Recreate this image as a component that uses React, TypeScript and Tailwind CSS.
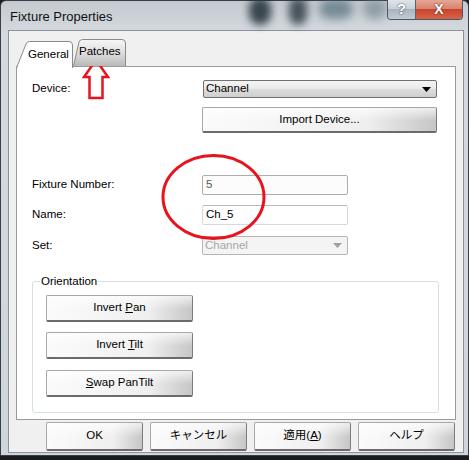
import type { ReactNode } from "react";

const btnFace =
  "bg-[linear-gradient(180deg,rgba(255,255,255,0.7)_0%,rgba(255,255,255,0)_55%),linear-gradient(90deg,#fbfbfb_0%,#efefef_70%,#c6c6c6_100%)]";

function WinButton({ children, className = "" }: { children: ReactNode; className?: string }) {
  return (
    <div
      className={`flex items-center justify-center rounded-[2px] border border-[#a8a8a8] border-b-2 border-b-[#6b6b6b] border-r-[#7c7c7c] text-black ${btnFace} ${className}`}
    >
      {children}
    </div>
  );
}

function Caret({ color }: { color: string }) {
  return (
    <svg width="9" height="5" viewBox="0 0 9 5">
      <path d="M0 0 L9 0 L4.5 5 Z" fill={color} />
    </svg>
  );
}

export default function App() {
  return (
    <div className="relative h-[460px] w-[469px] overflow-hidden bg-[#1b1b1b] font-['Liberation_Sans','Noto_Sans_CJK_JP',sans-serif] text-[11.5px] text-black">
      <div className="relative flex h-[456px] w-[469px] flex-col rounded-t-[6px] border border-[#3a3f45] bg-[linear-gradient(180deg,#c4cad0_0%,#d3d9df_30px,#cfd5dc_100%)]">
        {/* blurred desktop behind the glass */}
        <div className="absolute left-[248px] top-[-4px] h-[28px] w-[22px] rounded-full bg-[#1f2d35] opacity-85 blur-[4px]" />
        <div className="absolute left-[288px] top-[-4px] h-[28px] w-[18px] rounded-full bg-[#25323a] opacity-80 blur-[4px]" />
        <div className="absolute left-[318px] top-[-2px] h-[20px] w-[34px] rounded-full bg-[#4b6774] opacity-65 blur-[5px]" />
        <div className="absolute left-[362px] top-[-2px] h-[20px] w-[24px] rounded-full bg-[#62747d] opacity-55 blur-[5px]" />

        {/* title bar */}
        <div className="relative h-[29px] shrink-0 pl-[9px] pt-[8px] text-[13px] leading-[15px] text-[#111]">
          Fixture Properties
          <div className="absolute right-[5px] top-[-1px] flex h-[20px] overflow-hidden rounded-b-[4px] border border-t-0 border-[#4c5660]">
            <div className="flex w-[28px] items-center justify-center border-r border-[#59636c] bg-[linear-gradient(180deg,#dfe5ea_0%,#c9d1d8_45%,#a9b4bd_50%,#c2cbd2_100%)] text-[14px] font-bold text-white [text-shadow:0_0_2px_#2a3035]">
              ?
            </div>
            <div className="flex w-[46px] items-center justify-center bg-[linear-gradient(180deg,#e6a797_0%,#d98470_45%,#c8452c_50%,#d7654a_100%)] text-[14px] font-bold text-white [text-shadow:0_0_2px_#3a1208]">
              X
            </div>
          </div>
        </div>

        {/* client area */}
        <div className="ml-[7px] flex h-[423px] w-[456px] flex-col border border-[#8d939a] bg-[#f0f0f0] pl-[7px] pt-[8px]">
          {/* tabs */}
          <div className="relative z-10 -mb-px flex h-[28px] items-end">
            <div className="relative h-[27px] w-[57px]">
              <svg className="absolute inset-0" width="57" height="28" viewBox="0 0 57 28">
                <path d="M0.5 28 L10 4 Q11 1.5 13.5 1.5 L53 1.5 Q56.5 1.5 56.5 5 L56.5 28" fill="#ffffff" stroke="#8a8a8a" />
              </svg>
              <span className="absolute left-[12px] top-[7px] leading-[14px]">General</span>
            </div>
            <div className="relative mb-px h-[28px] w-[53px]">
              <svg className="absolute inset-0" width="53" height="28" viewBox="0 0 53 28">
                <defs>
                  <linearGradient id="tabg" x1="0" y1="0" x2="0" y2="1">
                    <stop offset="0" stopColor="#f7f7f7" />
                    <stop offset="0.5" stopColor="#dedede" />
                    <stop offset="1" stopColor="#b9b9b9" />
                  </linearGradient>
                </defs>
                <path d="M0.5 28 L6 4 Q7 1.5 9.5 1.5 L49 1.5 Q52.5 1.5 52.5 5 L52.5 28" fill="url(#tabg)" stroke="#8a8a8a" />
              </svg>
              <span className="absolute left-[6px] top-[6px] leading-[14px]">Patches</span>
            </div>
          </div>

          {/* tab page */}
          <div className="flex h-[354px] w-[440px] flex-col border border-[#9a9a9a] bg-white pl-[15px]">
            <div className="mt-[13px] flex h-[18px] items-center">
              <span className="w-[171px]">Device:</span>
              <div className="flex h-[18px] w-[234px] items-center justify-between rounded-[2px] border border-[#707070] bg-[linear-gradient(180deg,#f4f4f4_0%,#e9e9e9_50%,#dcdcdc_51%,#d0d0d0_100%)] pl-[2px] pr-[5px]">
                <span>Channel</span>
                <Caret color="#000000" />
              </div>
            </div>

            <WinButton className="ml-[170px] mt-[9px] h-[26px] w-[235px]">Import Device...</WinButton>

            <div className="mt-[42px] flex h-[20px] items-center">
              <span className="w-[170px]">Fixture Number:</span>
              <div className="flex h-[20px] w-[146px] items-center rounded-[2px] border border-[#adadad] bg-[#fcfcfc] pl-[3px] text-[#555]">
                5
              </div>
            </div>

            <div className="mt-[10px] flex h-[20px] items-center">
              <span className="w-[170px]">Name:</span>
              <div className="flex h-[20px] w-[146px] items-center rounded-[2px] border border-[#d5d9de] border-t-[#b7b9bd] bg-white pl-[3px]">
                Ch_5
              </div>
            </div>

            <div className="mt-[11px] flex h-[19px] items-center">
              <span className="w-[170px]">Set:</span>
              <div className="flex h-[19px] w-[146px] items-center justify-between rounded-[2px] border border-[#b5b5b5] bg-[#f4f4f4] pl-[2px] pr-[5px] text-[#a7a7a7]">
                <span>Channel</span>
                <Caret color="#a0a0a0" />
              </div>
            </div>

            <div className="relative mt-[26px] flex h-[132px] w-[407px] flex-col rounded-[3px] border border-[#d5dfe5] pl-[13px] pt-[13px]">
              <span className="absolute left-[7px] top-[-8px] bg-white px-px leading-[14px]">Orientation</span>
              <WinButton className="h-[27px] w-[147px]">
                <span>
                  Invert <u>P</u>an
                </span>
              </WinButton>
              <WinButton className="mt-[10px] h-[27px] w-[147px]">
                <span>
                  Invert <u>T</u>ilt
                </span>
              </WinButton>
              <WinButton className="mt-[11px] h-[27px] w-[147px]">
                <span>
                  <u>S</u>wap PanTilt
                </span>
              </WinButton>
            </div>
          </div>

          {/* dialog buttons */}
          <div className="mt-[2px] flex gap-[7px] pl-[30px]">
            <WinButton className="h-[29px] w-[97px]">OK</WinButton>
            <WinButton className="h-[29px] w-[97px]">キャンセル</WinButton>
            <WinButton className="h-[29px] w-[97px]">
              <span>
                適用(<u>A</u>)
              </span>
            </WinButton>
            <WinButton className="h-[29px] w-[97px]">ヘルプ</WinButton>
          </div>
        </div>
      </div>

      {/* red annotations */}
      <svg className="pointer-events-none absolute left-0 top-0" width="469" height="460" viewBox="0 0 469 460">
        <path
          d="M96 60 L84 77 L89.5 77 L89.5 98 L102.5 98 L102.5 77 L108 77 Z"
          fill="none"
          stroke="#e8131c"
          strokeWidth="2.5"
          strokeLinejoin="miter"
        />
        <ellipse cx="213.5" cy="197" rx="50.5" ry="41.5" fill="none" stroke="#e8131c" strokeWidth="3" />
      </svg>
    </div>
  );
}
